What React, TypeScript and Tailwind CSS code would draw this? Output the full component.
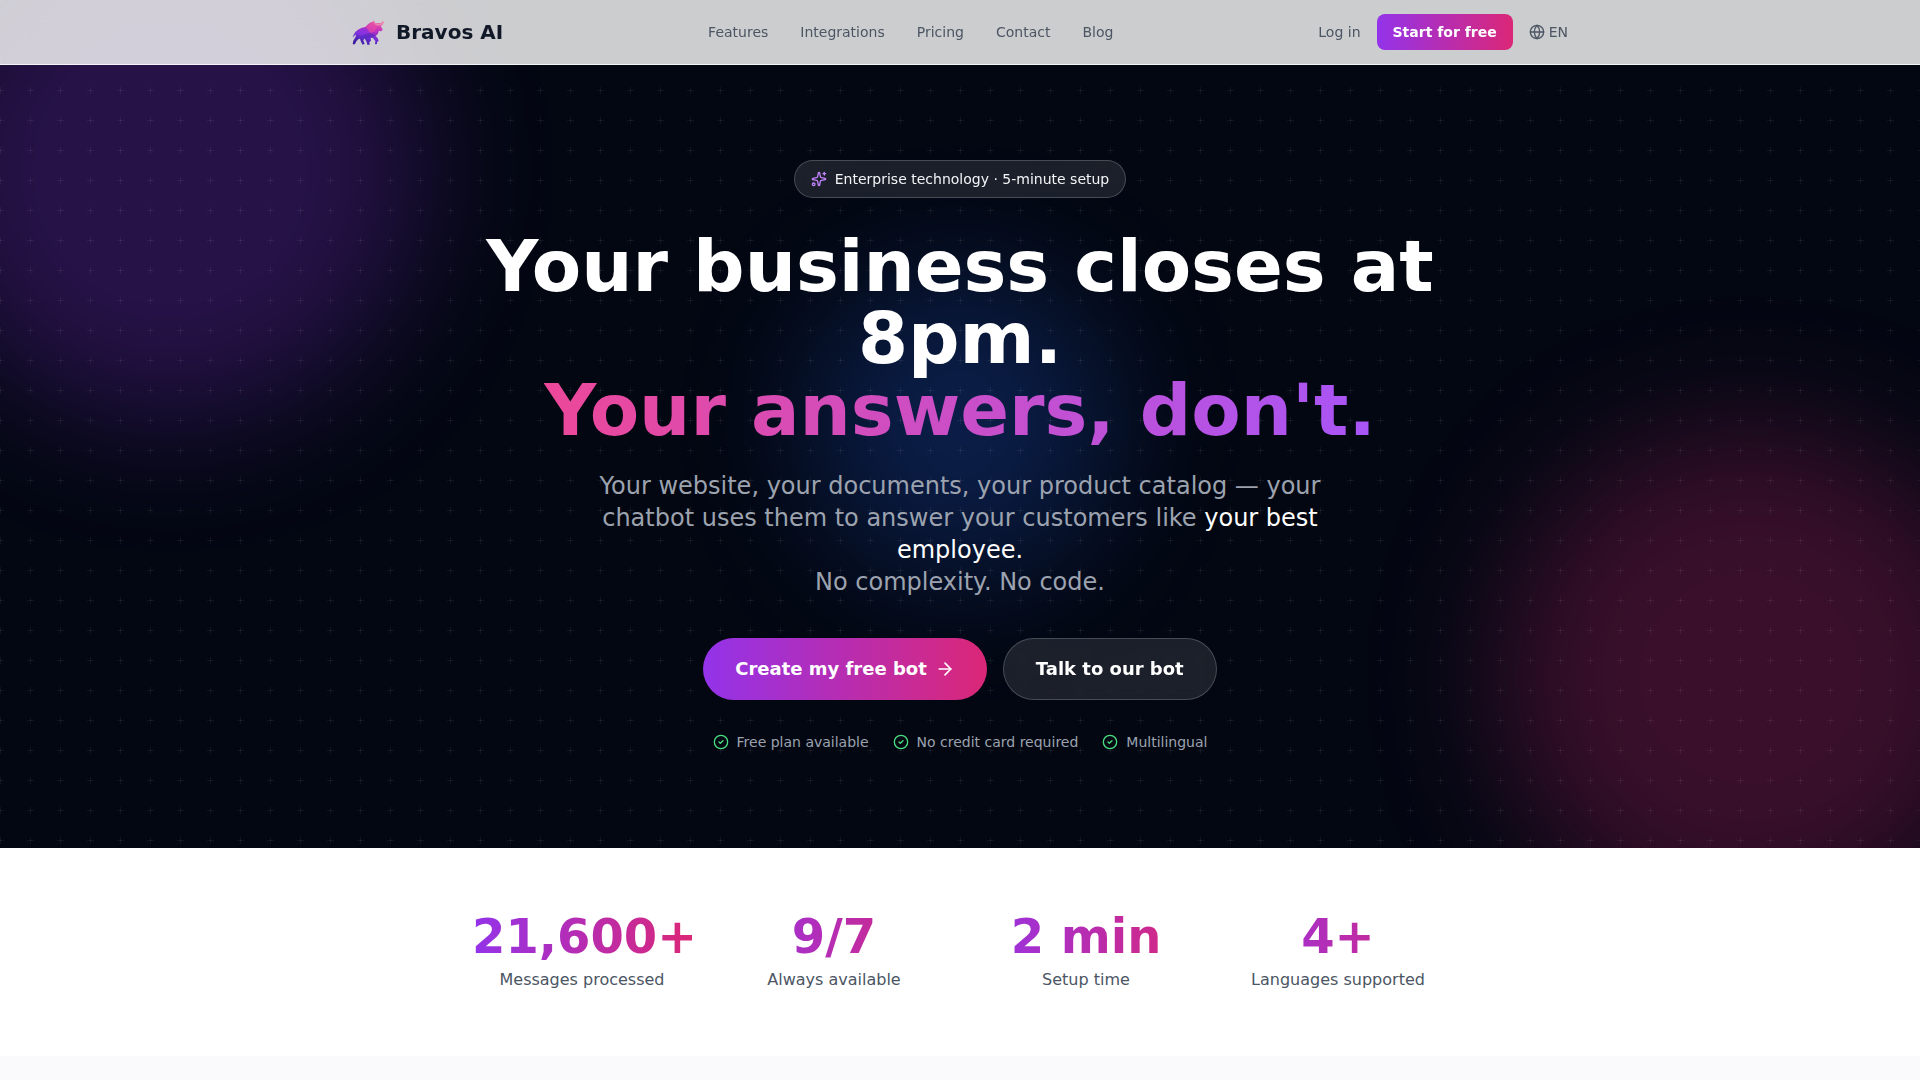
import { ArrowRight, CircleCheck, Globe, Sparkles } from "lucide-react";

const navLinks = ["Features", "Integrations", "Pricing", "Contact", "Blog"];

const perks = ["Free plan available", "No credit card required", "Multilingual"];

const stats = [
  { value: "21,600+", label: "Messages processed" },
  { value: "9/7", label: "Always available" },
  { value: "2 min", label: "Setup time" },
  { value: "4+", label: "Languages supported" },
];

function BullLogo() {
  return (
    <svg viewBox="36 48 96 96" className="size-8" aria-hidden="true">
      <defs>
        <linearGradient id="bull" x1="0.75" y1="0" x2="0.35" y2="1">
          <stop offset="0" stopColor="#f0609a" />
          <stop offset="0.35" stopColor="#c02fc0" />
          <stop offset="0.7" stopColor="#6f2ed6" />
          <stop offset="1" stopColor="#3b1f9e" />
        </linearGradient>
      </defs>
      <path
        fill="url(#bull)"
        d="M38 133 L40 122 L47 110 L48 103 L43 107 L38 113 L41 104 L46 96 L54 89 L66 83 L76 81 L84 73 L92 67 L99 66 L98 61 L102 64 L106 69 L115 70 L124 69 L129 62 L131 68 L127 75 L122 78 L126 84 L128 90 L123 94 L116 93 L114 101 L107 108 L113 115 L116 122 L111 127 L111 132 L105 133 L106 123 L98 113 L92 113 L93 122 L88 127 L89 134 L82 134 L80 126 L73 115 L70 122 L74 131 L68 134 L63 125 L60 117 L57 116 L49 124 L45 133 Z"
      />
      <path fill="#ec4fa4" fillOpacity="0.6" d="M78 82 L92 68 L108 71 L112 80 L104 96 L90 98 Z" />
      <path fill="#f59abb" fillOpacity="0.7" d="M98 61 L104 69 L116 72 L125 70 L129 62 L131 68 L126 75 L114 77 L103 72 Z" />
      <path fill="#8b35e8" fillOpacity="0.6" d="M46 98 L62 86 L78 84 L88 98 L66 108 Z" />
      <path fill="#4a25b8" fillOpacity="0.5" d="M62 108 L88 99 L106 106 L98 113 L84 113 L73 115 Z" />
    </svg>
  );
}

function Header() {
  return (
    <header className="fixed inset-x-0 top-0 z-50 border-b border-gray-100 bg-white/80 backdrop-blur-lg">
      <div className="mx-auto flex h-16 max-w-7xl items-center justify-between px-8">
        <a href="#" className="flex items-center gap-3 text-xl font-bold text-[#111827]">
          <BullLogo />
          Bravos AI
        </a>
        <nav className="flex items-center gap-8 text-sm text-[#4b5563]">
          {navLinks.map((link) => (
            <a key={link} href="#">{link}</a>
          ))}
        </nav>
        <div className="flex items-center gap-4 text-sm text-[#4b5563]">
          <a href="#">Log in</a>
          <a href="#" className="rounded-lg bg-linear-to-r/srgb from-[#9333ea] to-[#db2777] px-4 py-2 font-semibold text-white">
            Start for free
          </a>
          <button type="button" className="flex items-center gap-1">
            <Globe size={16} />
            EN
          </button>
        </div>
      </div>
    </header>
  );
}

function HeroBackground() {
  return (
    <div className="pointer-events-none absolute inset-0" aria-hidden="true">
      <div className="absolute -top-20 -left-20 size-[500px] rounded-full bg-[#9333ea]/25 blur-3xl" />
      <div className="absolute -right-20 -bottom-20 size-[500px] rounded-full bg-[#db2777]/25 blur-3xl" />
      <div className="absolute top-1/2 left-1/2 size-[300px] -translate-x-1/2 -translate-y-1/2 rounded-full bg-[#2563eb]/25 blur-3xl" />
      <svg className="absolute inset-0 size-full">
        <defs>
          <pattern id="plus-grid" width="30" height="30" patternUnits="userSpaceOnUse">
            <path d="M0 0h4v1h-4zM27 0h3v1h-3zM0 1h1v3h-1zM0 27h1v3h-1z" fill="#fff" fillOpacity="0.05" />
            <path d="M0 0h1v1h-1z" fill="#fff" fillOpacity="0.08" />
          </pattern>
        </defs>
        <rect width="100%" height="100%" fill="url(#plus-grid)" />
      </svg>
    </div>
  );
}

function Hero() {
  return (
    <section className="relative overflow-hidden bg-[#030712] pt-40 pb-24">
      <HeroBackground />
      <div className="relative mx-auto flex max-w-5xl flex-col items-center px-6 text-center">
        <div className="mb-8 flex items-center gap-2 rounded-full border border-white/20 bg-white/10 px-4 py-2 text-sm text-[#f3f4f6] backdrop-blur-sm">
          <Sparkles size={16} className="text-[#c084fc]" />
          Enterprise technology · 5-minute setup
        </div>

        <h1 className="mb-6 text-7xl leading-none font-bold text-white">
          Your business closes at 8pm.
          <br />
          <span className="bg-linear-to-r/srgb from-[#ec4899] to-[#a855f7] bg-clip-text text-transparent">
            Your answers, don't.
          </span>
        </h1>

        <p className="mb-10 max-w-3xl text-2xl text-[#9ca3af]">
          Your website, your documents, your product catalog — your chatbot uses them to answer your customers like{" "}
          <span className="text-white">your best employee.</span>
          <br />
          No complexity. No code.
        </p>

        <div className="mb-8 flex gap-4 text-lg font-semibold text-white">
          <a href="#" className="flex items-center gap-2 rounded-full bg-linear-to-r/srgb from-[#9333ea] to-[#db2777] px-8 py-4">
            Create my free bot
            <ArrowRight size={20} />
          </a>
          <button type="button" className="rounded-full border border-white/20 bg-white/10 px-8 py-4 backdrop-blur-sm">
            Talk to our bot
          </button>
        </div>

        <ul className="flex gap-6 text-sm text-[#9ca3af]">
          {perks.map((perk) => (
            <li key={perk} className="flex items-center gap-2">
              <CircleCheck size={16} className="text-[#4ade80]" />
              {perk}
            </li>
          ))}
        </ul>
      </div>
    </section>
  );
}

function Stats() {
  return (
    <section className="bg-white py-16">
      <div className="mx-auto grid max-w-5xl grid-cols-4 gap-8 px-6 text-center">
        {stats.map((stat) => (
          <div key={stat.label}>
            <div className="mb-2 bg-linear-to-r/srgb from-[#9333ea] to-[#db2777] bg-clip-text text-5xl leading-none font-bold text-transparent">
              {stat.value}
            </div>
            <div className="text-[#4b5563]">{stat.label}</div>
          </div>
        ))}
      </div>
    </section>
  );
}

export default function App() {
  return (
    <div className="min-h-screen bg-[#fafafc] font-['DejaVu_Sans',sans-serif]">
      <Header />
      <main>
        <Hero />
        <Stats />
      </main>
    </div>
  );
}
